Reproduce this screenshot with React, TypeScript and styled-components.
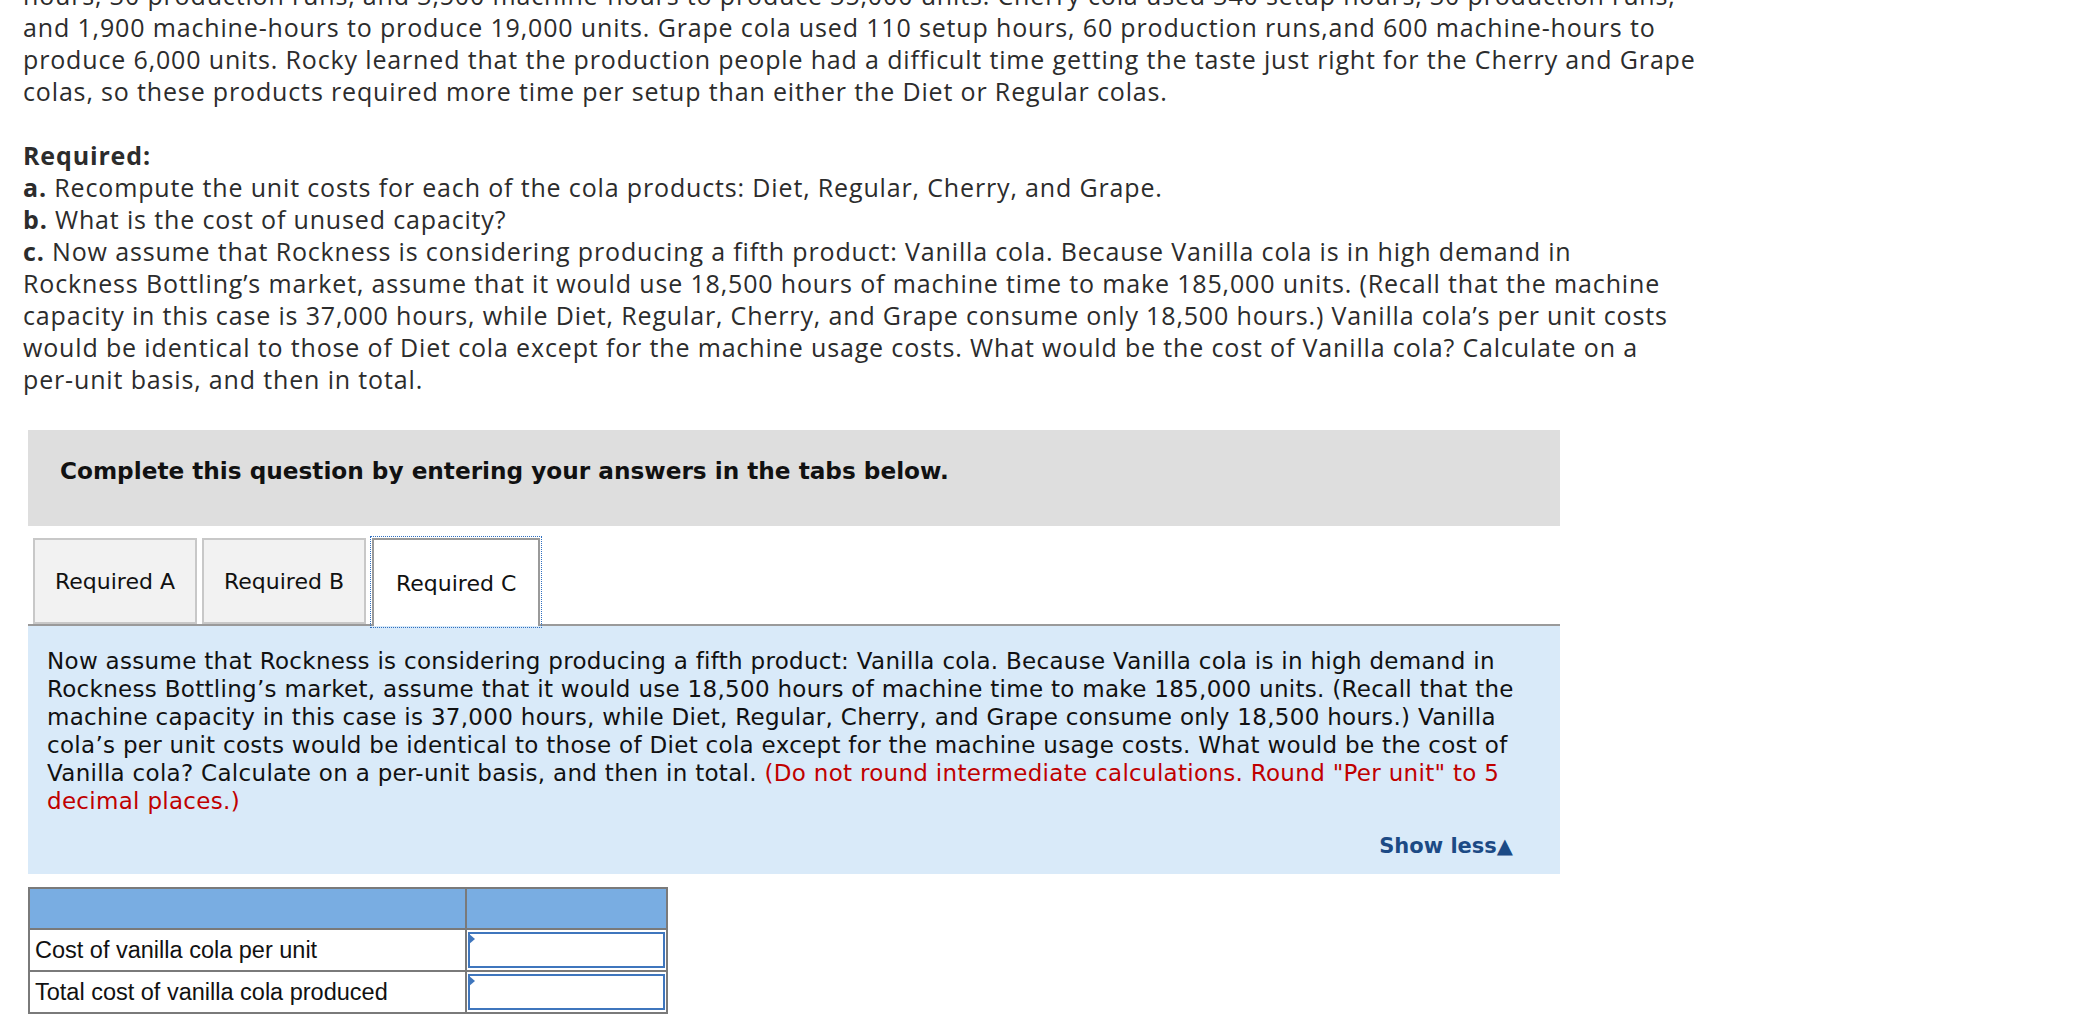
import React from 'react';
import styled, { createGlobalStyle } from 'styled-components';

const GlobalStyle = createGlobalStyle`
  html, body {
    margin: 0;
    padding: 0;
    background: #ffffff;
  }
  body {
    overflow: hidden;
  }
`;

const Page = styled.div`
  padding-left: 23px;
  width: 2066px;
  height: 1019px;
  overflow: hidden;
`;

const Intro = styled.div`
  margin-top: -21px;
  font-family: 'Open Sans', 'Liberation Sans', sans-serif;
  font-size: 25px;
  line-height: 32px;
  letter-spacing: 0.85px;
  color: #2c2c2c;
`;

const Line = styled.div<{ bold?: boolean }>`
  white-space: nowrap;
  min-height: 32px;
  font-weight: ${({ bold }) => (bold ? 700 : 400)};
`;

const Strong = styled.b`
  font-weight: 700;
`;

const Question = styled.section`
  margin: 35px 0 0 5px;
  width: 1532px;
`;

const Banner = styled.div`
  box-sizing: border-box;
  height: 96px;
  padding: 26px 32px 0;
  background: #dedede;
  font-family: 'DejaVu Sans', Verdana, sans-serif;
  font-weight: bold;
  font-size: 23.2px;
  line-height: 30px;
  color: #111;
`;

const TabBar = styled.div`
  display: flex;
  align-items: flex-end;
  gap: 5px;
  margin-top: 12px;
  padding-left: 5px;
  border-bottom: 2px solid #9a9a9a;
`;

const Tab = styled.button<{ active?: boolean }>`
  box-sizing: border-box;
  height: ${({ active }) => (active ? '88px' : '86px')};
  margin-bottom: ${({ active }) => (active ? '-2px' : '0')};
  margin-left: ${({ active }) => (active ? '1px' : '0')};
  padding: 0 ${({ active }) => (active ? '22px' : '20px')};
  border: 2px solid ${({ active }) => (active ? '#9a9a9a' : '#c8c8c8')};
  border-bottom: ${({ active }) => (active ? 'none' : '2px solid #c8c8c8')};
  background: ${({ active }) => (active ? '#ffffff' : '#f2f2f2')};
  outline: ${({ active }) => (active ? '1px dotted #2f6fc0' : 'none')};
  outline-offset: 1px;
  font-family: 'DejaVu Sans', Verdana, sans-serif;
  font-size: 22px;
  color: #111;
  cursor: pointer;
`;

const Panel = styled.div`
  background: #d9eaf9;
  padding: 21px 47px 14px 19px;
  font-family: 'DejaVu Sans', Verdana, sans-serif;
  font-size: 23px;
  line-height: 28px;
  letter-spacing: 0.3px;
  color: #111;
`;

const PanelLine = styled.div`
  white-space: nowrap;
`;

const Hint = styled.span`
  color: #c00000;
`;

const ShowLess = styled.div`
  margin-top: 17px;
  text-align: right;
  font-weight: bold;
  font-size: 21px;
  letter-spacing: 0;
  color: #1c4a85;
  cursor: pointer;
`;

const Answers = styled.table`
  margin-top: 13px;
  border-collapse: collapse;
  font-family: 'Liberation Sans', Arial, sans-serif;
  font-size: 23.5px;
  color: #111;
`;

const HeadCell = styled.th<{ wide?: boolean }>`
  width: ${({ wide }) => (wide ? '435px' : '199px')};
  height: 39px;
  padding: 0;
  background: #79ade2;
  border: 2px solid #7a7a7a;
`;

const LabelCell = styled.td`
  height: 38px;
  padding: 0 5px;
  border: 2px solid #7a7a7a;
  white-space: nowrap;
`;

const InputCell = styled.td`
  height: 38px;
  padding: 1px;
  border: 2px solid #7a7a7a;
`;

const InputBox = styled.div`
  position: relative;
  box-sizing: border-box;
  height: 36px;
  border: 2px solid #3f76bd;
  background: #ffffff;

  &::before {
    content: '';
    position: absolute;
    top: -1px;
    left: -2px;
    border-top: 6px solid transparent;
    border-bottom: 6px solid transparent;
    border-left: 7px solid #3f76bd;
  }
`;

const introLines = [
  'hours, 30 production runs, and 3,500 machine-hours to produce 35,000 units. Cherry cola used 340 setup hours, 30 production runs,',
  'and 1,900 machine-hours to produce 19,000 units. Grape cola used 110 setup hours, 60 production runs,and 600 machine-hours to',
  'produce 6,000 units. Rocky learned that the production people had a difficult time getting the taste just right for the Cherry and Grape',
  'colas, so these products required more time per setup than either the Diet or Regular colas.',
];

const partC = [
  'Rockness Bottling’s market, assume that it would use 18,500 hours of machine time to make 185,000 units. (Recall that the machine',
  'capacity in this case is 37,000 hours, while Diet, Regular, Cherry, and Grape consume only 18,500 hours.) Vanilla cola’s per unit costs',
  'would be identical to those of Diet cola except for the machine usage costs. What would be the cost of Vanilla cola? Calculate on a',
  'per-unit basis, and then in total.',
];

const rows = ['Cost of vanilla cola per unit', 'Total cost of vanilla cola produced'];

const App: React.FC = () => {
  return (
    <Page>
      <GlobalStyle />
      <Intro>
        {introLines.map((text) => (
          <Line key={text}>{text}</Line>
        ))}
        <Line />
        <Line bold>Required:</Line>
        <Line>
          <Strong>a.</Strong> Recompute the unit costs for each of the cola products: Diet, Regular, Cherry, and Grape.
        </Line>
        <Line>
          <Strong>b.</Strong> What is the cost of unused capacity?
        </Line>
        <Line>
          <Strong>c.</Strong> Now assume that Rockness is considering producing a fifth product: Vanilla cola. Because Vanilla cola is in high demand in
        </Line>
        {partC.map((text) => (
          <Line key={text}>{text}</Line>
        ))}
      </Intro>

      <Question>
        <Banner>Complete this question by entering your answers in the tabs below.</Banner>
        <TabBar>
          <Tab>Required A</Tab>
          <Tab>Required B</Tab>
          <Tab active>Required C</Tab>
        </TabBar>
        <Panel>
          <PanelLine>Now assume that Rockness is considering producing a fifth product: Vanilla cola. Because Vanilla cola is in high demand in</PanelLine>
          <PanelLine>Rockness Bottling’s market, assume that it would use 18,500 hours of machine time to make 185,000 units. (Recall that the</PanelLine>
          <PanelLine>machine capacity in this case is 37,000 hours, while Diet, Regular, Cherry, and Grape consume only 18,500 hours.) Vanilla</PanelLine>
          <PanelLine>cola’s per unit costs would be identical to those of Diet cola except for the machine usage costs. What would be the cost of</PanelLine>
          <PanelLine>
            Vanilla cola? Calculate on a per-unit basis, and then in total.{' '}
            <Hint>(Do not round intermediate calculations. Round "Per unit" to 5</Hint>
          </PanelLine>
          <PanelLine>
            <Hint>decimal places.)</Hint>
          </PanelLine>
          <ShowLess>Show less▲</ShowLess>
        </Panel>
        <Answers>
          <thead>
            <tr>
              <HeadCell wide />
              <HeadCell />
            </tr>
          </thead>
          <tbody>
            {rows.map((label) => (
              <tr key={label}>
                <LabelCell>{label}</LabelCell>
                <InputCell>
                  <InputBox />
                </InputCell>
              </tr>
            ))}
          </tbody>
        </Answers>
      </Question>
    </Page>
  );
};

export default App;
